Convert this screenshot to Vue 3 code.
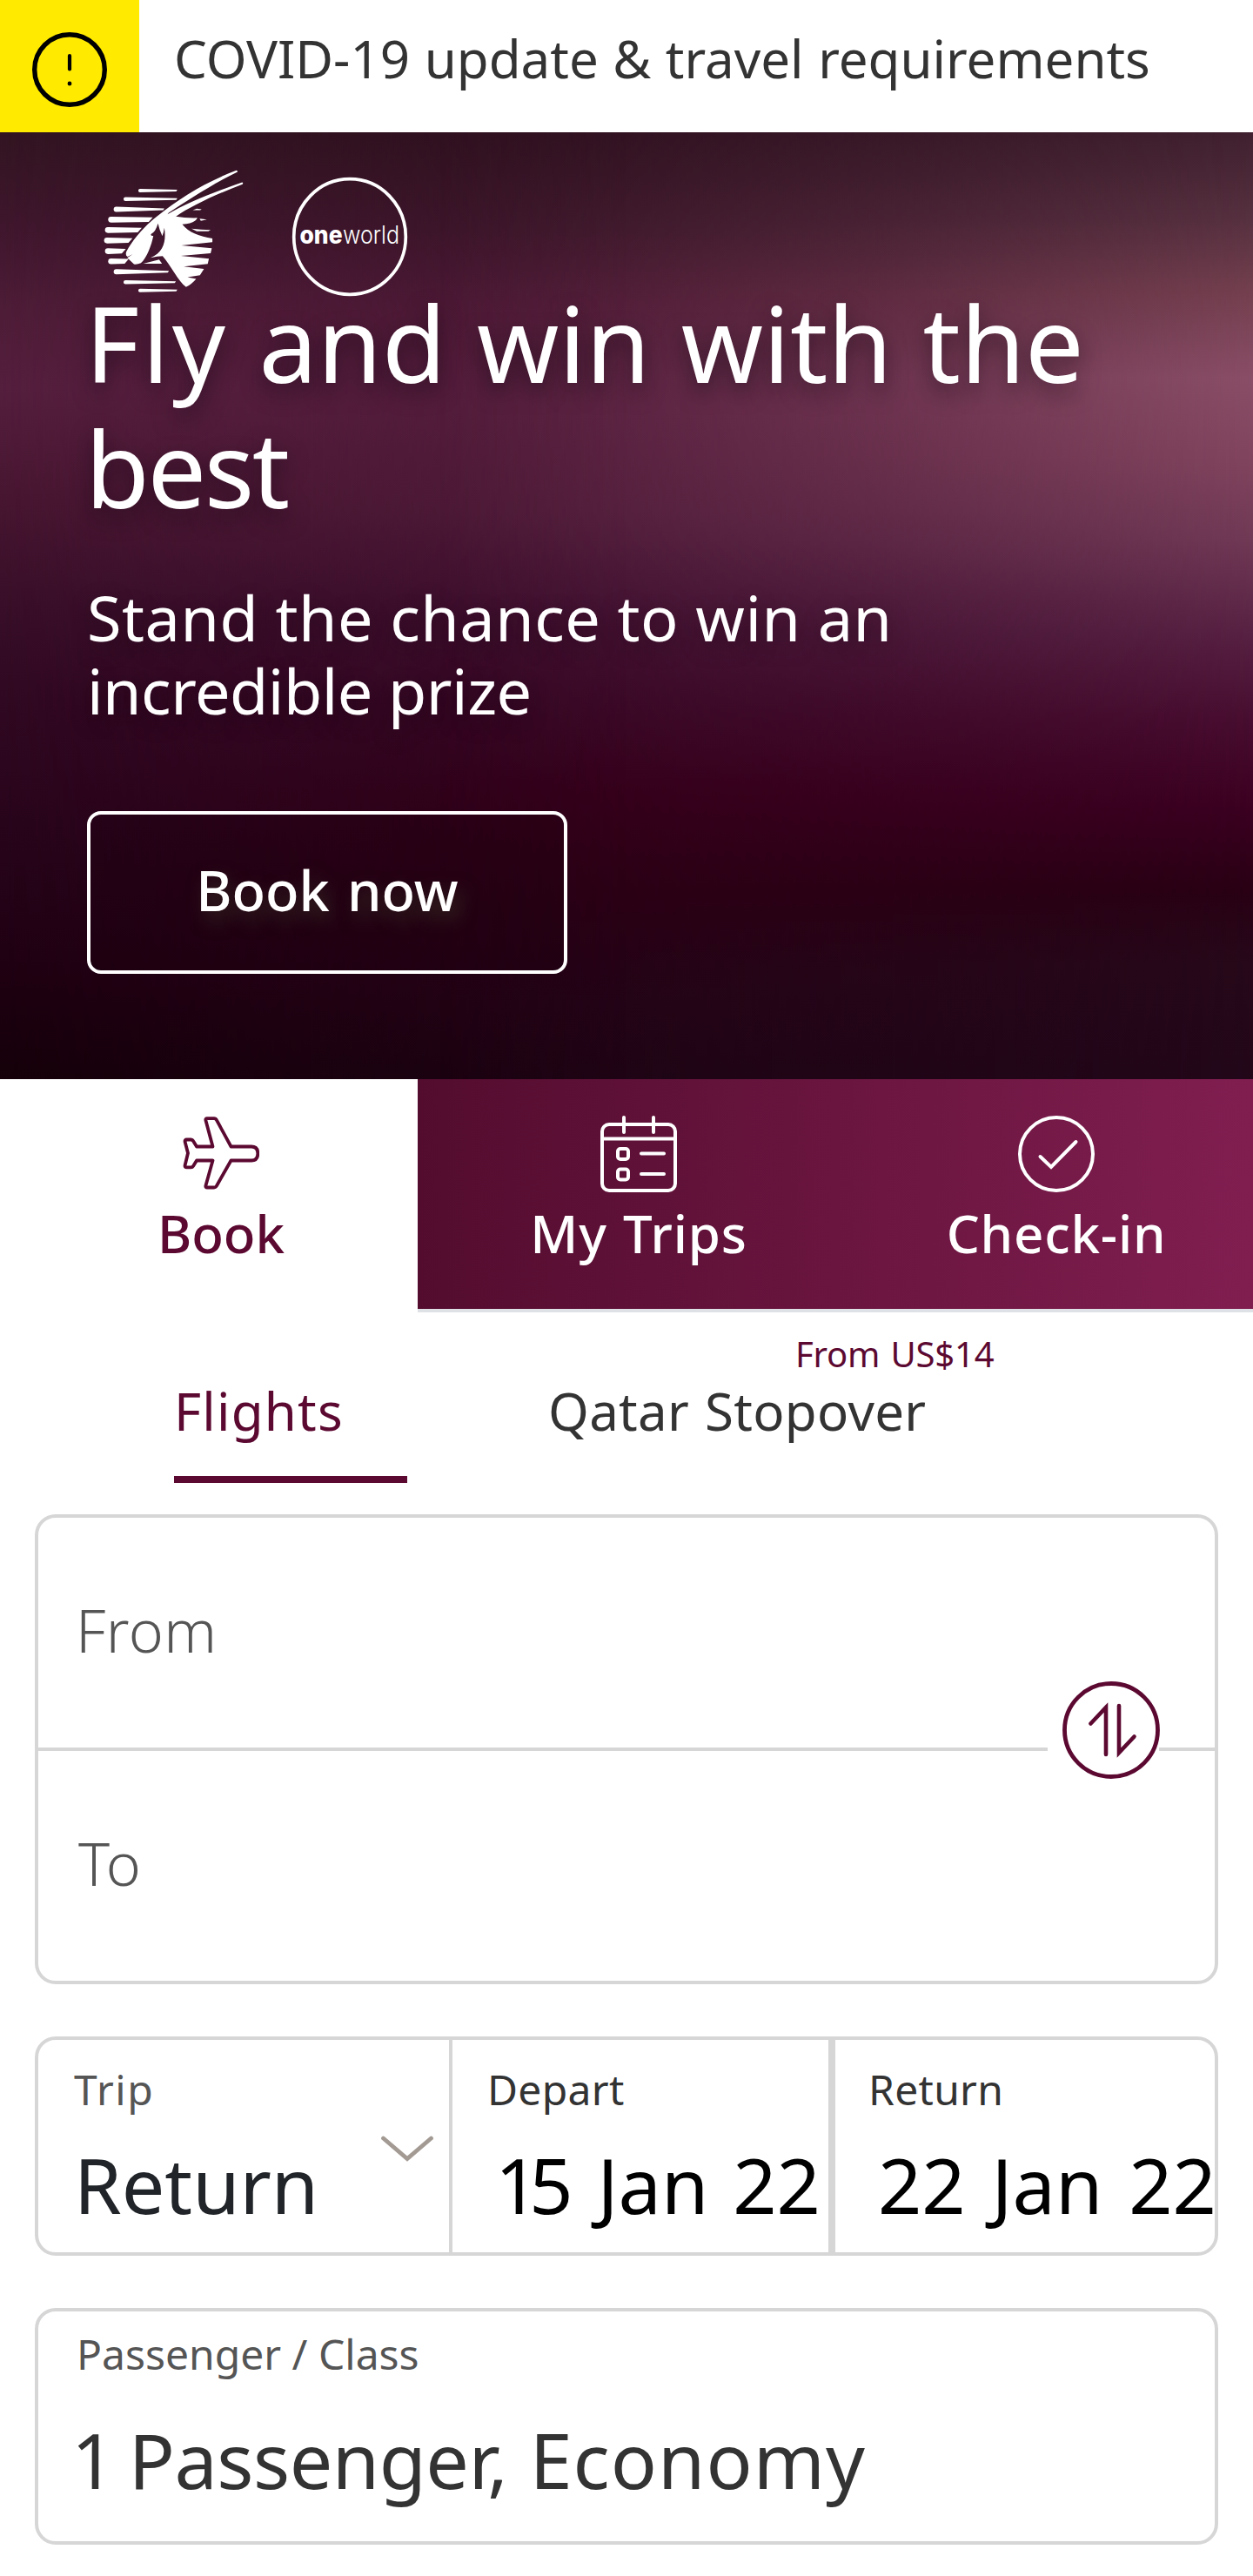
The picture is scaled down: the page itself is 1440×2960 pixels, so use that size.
<script setup>
const stripes = [
  [178, 118, 313, 6], [127, 147, 313, 7], [93, 182, 268, 9], [74, 218, 228, 10],
  [63, 254, 190, 10], [60, 290, 158, 10], [63, 327, 135, 10], [74, 362, 145, 10],
  [93, 398, 284, 9], [127, 434, 308, 7], [178, 463, 313, 6],
].map(([x, y, end, r]) => {
  const tail = end > 250 ? 3 : r - 2
  return `M${x + r} ${y - r}L${end} ${y - tail}L${end - (end > 250 ? 4 : 14)} ${y + tail}L${x + r} ${y + r}A${r} ${r} 0 0 1 ${x + r} ${y - r}Z`
})
</script>

<template>
  <div class="page">
    <div class="alert">
      <div class="alert-icon">
        <svg viewBox="0 0 88 88" width="88" height="88" fill="none" stroke="#000" stroke-linecap="round">
          <circle cx="44" cy="44" r="40.3" stroke-width="5.4" />
          <path d="M44 28V43.500" stroke-width="4.200" />
          <path d="M44 59.800V60.200" stroke-width="4.600" />
        </svg>
      </div>
      <span class="alert-text">COVID-19 update &amp; travel requirements</span>
    </div>

    <section class="hero">
      <div class="glow"></div>
      <div class="hero-body">
        <div class="logos">
          <svg class="oryx" viewBox="55 40 490 435" width="163" height="145" fill="#fff">
            <path v-for="d in stripes" :key="d" :d="d" />
            <path d="M195 370L250 356L260 370Z" />
            <path d="M517 48Q521 48 521 53C440 92 350 150 283 194L279 200C345 160 420 130 537 89Q542 91 538 96C440 133 360 172 308 207Q340 213 382 212Q376 231 330 234C352 262 390 276 434 283V296L327 307L432 317L428 334L325 343L422 353L418 371L335 380L405 388L391 410L348 417L378 423Q362 442 343 451C315 430 290 375 262 344Q245 344 220 350C270 330 274 285 268 246Q266 262 261 275Q250 250 246 231Q238 260 222 268Q220 275 230 274C224 305 208 350 187 368Q174 374 163 372L140 350L159 337L141 346Q132 341 137 328C160 285 205 235 245 205C320 145 410 88 517 48Z" />
            <path d="M366 185L380 180L397 182L392 185ZM390 215L415 218L394 222ZM362 249L395 252L428 254L420 258L380 258Z" />
          </svg>
          <svg class="oneworld" viewBox="0 0 136 138" width="136" height="138">
            <ellipse cx="68" cy="69" rx="64.300" ry="66.300" fill="none" stroke="#fff" stroke-width="3.700" />
            <text y="77" x="10.500" textLength="49" lengthAdjust="spacingAndGlyphs" class="one">one</text>
            <text y="77" x="60" textLength="65" lengthAdjust="spacingAndGlyphs" class="world">world</text>
          </svg>
        </div>
        <h1><span class="loose">Fly</span> and win with the<br /><span class="tight">best</span></h1>
        <p><span class="wide">Stand the chance to win an</span><br />incredible prize</p>
        <button class="book-now">Book now</button>
      </div>
    </section>

    <nav class="tabs">
      <div class="tab active">
        <svg viewBox="0 0 88 88" width="88" height="88" fill="none" stroke="#5c0931" stroke-width="3.800" stroke-linejoin="round">
          <path d="M28 3.200H36Q38 3.200 39 5.200L55.500 35.500H79Q86.300 35.500 86.300 43.500Q86.300 51.500 79 51.500H55.500L39 80.500Q38 82.500 36 82.500H28Q26 82.500 26.400 80.500L34.500 51.500H16L12 58Q11.200 59.300 9.500 59.300H4.500Q2.200 59.300 2.600 57L6 43L2.600 30Q2.200 27.500 4.500 27.500H9.500Q11.200 27.500 12 29L16 35.500H34.500L26.400 5.200Q26 3.200 28 3.200Z" />
        </svg>
        <span>Book</span>
      </div>
      <div class="tab">
        <svg viewBox="0 0 88 88" width="88" height="88" fill="none" stroke="#fff" stroke-width="4" stroke-linecap="round">
          <rect x="2" y="10" width="84" height="76" rx="8" />
          <path d="M2 26.500H86M27 2V19M61 2V19M47 43.500H73M47 67H73" />
          <rect x="20" y="38" width="12" height="12" rx="3" />
          <rect x="20" y="61.500" width="12" height="12" rx="3" />
        </svg>
        <span>My Trips</span>
      </div>
      <div class="tab">
        <svg viewBox="0 0 88 88" width="88" height="88" fill="none" stroke="#fff" stroke-width="4" stroke-linecap="round">
          <circle cx="44" cy="44" r="42" />
          <path d="M25.500 47L38 59L66.500 30" />
        </svg>
        <span>Check-in</span>
      </div>
    </nav>

    <div class="subnav">
      <div class="sub selected">Flights</div>
      <div class="sub stopover">
        <span class="price">From US$14</span>
        <span>Qatar Stopover</span>
      </div>
    </div>

    <div class="card places">
      <div class="place">From</div>
      <div class="place to">To</div>
      <div class="swap">
        <svg viewBox="0 0 112 112" width="112" height="112" fill="none" stroke="#5c0931" stroke-linecap="round">
          <circle cx="56" cy="56" r="53.500" stroke-width="4.800" />
          <path d="M32.500 48.500L50 30V84" stroke-width="4.600" />
          <path d="M65 28V82L82.500 63.500" stroke-width="4.600" />
        </svg>
      </div>
    </div>

    <div class="card dates">
      <div class="cell trip">
        <div class="label muted">Trip</div>
        <div class="value">Return</div>
        <svg class="chevron" viewBox="0 0 60 30" width="60" height="30" fill="none" stroke="#a39a93" stroke-width="4.800" stroke-linecap="round">
          <path d="M2.500 3L30 26.500L57.500 3" />
        </svg>
      </div>
      <div class="cell depart">
        <div class="label">Depart</div>
        <div class="value date"><span class="slim">1</span>5 Jan 22</div>
      </div>
      <div class="cell return">
        <div class="label">Return</div>
        <div class="value date">22 Jan 22</div>
      </div>
    </div>

    <div class="card passengers">
      <div class="label muted">Passenger / Class</div>
      <div class="value"><span class="slim">1</span> Passenger, <span class="cabin">Economy</span></div>
    </div>
  </div>
</template>

<style>
body { margin: 0; background: #fff; }
</style>

<style scoped>
* { box-sizing: border-box; }
.page {
  width: 1440px;
  height: 2960px;
  overflow: hidden;
  background: #fff;
  color: #333;
  font-family: "Noto Sans", "Open Sans", sans-serif;
  white-space: nowrap;
}
.alert { display: flex; height: 152px; }
.alert-icon { width: 160px; padding: 36px; background: #ffea00; }
.alert-icon svg { display: block; }
.alert-text { padding-left: 40px; font-size: 60px; line-height: 134px; word-spacing: 1px; }

.hero {
  position: relative;
  height: 1088px;
  color: #fff;
  background: linear-gradient(180deg, #2f101f 0, #3b1529 10%, #4b1734 18%, #531c3b 29%, #4e1a38 40%, #400f2f 50%, #380825 60%, #330019 70%, #2a0015 82%, #230316 92%, #1e0414 100%);
}
.hero::before, .glow { content: ""; position: absolute; inset: 0; }
.hero::before {
  background: linear-gradient(180deg, #321421 0, #3f162d 10%, #4e1c37 19%, #541e3d 27%, #471530 39%, #380e28 50%, #300821 60%, #28041b 73%, #200013 87%, #150009 100%);
  -webkit-mask: linear-gradient(90deg, #000 0, transparent 50%);
  mask: linear-gradient(90deg, #000 0, transparent 50%);
}
.glow {
  background: linear-gradient(180deg, #40202f 0, #56303f 9%, #74404f 17%, #8a4e67 26%, #82455f 34%, #703955 43%, #572143 53%, #480d30 62%, #3c0021 71%, #290014 80%, #26081a 88%, #220719 100%);
  -webkit-mask: linear-gradient(90deg, transparent 35%, rgba(0,0,0,.12) 45%, rgba(0,0,0,.48) 70%, #000 100%);
  mask: linear-gradient(90deg, transparent 35%, rgba(0,0,0,.12) 45%, rgba(0,0,0,.48) 70%, #000 100%);
}
.hero-body { position: relative; padding-left: 98px; }
.logos { display: flex; height: 170px; align-items: flex-start; }
.oryx { flex: none; margin: 41px 0 0 20px; }
.oneworld { flex: none; margin: 51px 0 0 53px; }
.oneworld text { fill: #fff; font-family: Inter, "Liberation Sans", sans-serif; font-size: 28px; }
.one { font-weight: 800; }
.world { font-weight: 300; }
h1 {
  margin: 0;
  font-size: 120px;
  line-height: 144px;
  font-weight: 400;
  word-spacing: 4px;
  text-shadow: 0 10px 24px rgba(20, 10, 20, .55);
}
.loose { letter-spacing: 3.3px; }
.tight { letter-spacing: -2.4px; }
p {
  margin: 57px 0 0 2px;
  font-size: 72px;
  line-height: 84px;
  letter-spacing: -.5px;
  text-shadow: 0 8px 24px rgba(20, 0, 15, .4);
}
.wide { letter-spacing: .5px; }
.book-now {
  display: block;
  width: 552px;
  height: 187px;
  margin: 97px 0 0 2px;
  padding: 0 0 5px;
  border: 4px solid #fff;
  border-radius: 16px;
  background: rgba(20, 0, 10, .18);
  color: #fff;
  font: 500 63px/174px "Noto Sans", "Open Sans", sans-serif;
  word-spacing: 4px;
  text-shadow: 6px 10px 20px rgba(60, 60, 40, .7);
}

.tabs {
  display: grid;
  grid-template-columns: repeat(3, 480px);
  height: 268px;
  background: linear-gradient(90deg, #530c2e 480px, #801e50 1440px);
  color: #fff;
}
.tab {
  display: flex;
  flex-direction: column;
  align-items: center;
  padding: 42px 0 0 28px;
  border-bottom: 4px solid #dee2e6;
  font-size: 60px;
  line-height: 80px;
  font-weight: 500;
  letter-spacing: .8px;
  word-spacing: 2px;
}
.tab svg { margin-bottom: 7px; }
.tab.active { background: #fff; border-color: #fff; color: #5c0931; letter-spacing: 0; }

.subnav { display: flex; gap: 162px; height: 232px; padding-left: 200px; font-size: 60px; line-height: 80px; }
.selected { width: 268px; height: 196px; padding-top: 73px; border-bottom: 8px solid #5c0931; color: #5c0931; letter-spacing: 1.2px; }
.stopover { display: flex; flex-direction: column; padding-top: 23px; letter-spacing: .3px; word-spacing: 2px; }
.price { margin-left: 284px; font-size: 40px; line-height: 50px; color: #5c0931; letter-spacing: -.2px; }

.card { margin: 0 40px 60px; border: 4px solid #d6d6d6; border-radius: 24px; }
.places { position: relative; height: 540px; }
.place { height: 264px; padding-left: 43px; font-size: 68px; line-height: 258px; font-weight: 300; letter-spacing: .4px; color: #555; }
.place.to { height: 268px; border-top: 4px solid #d6d6d6; padding-left: 46px; }
.swap { position: absolute; left: 1160px; top: 188px; width: 128px; height: 112px; padding-left: 17px; background: #fff; }
.swap svg { display: block; overflow: visible; }

.label { font-size: 48px; line-height: 60px; letter-spacing: .3px; }
.muted { color: #555; }
.value { font-size: 88px; line-height: 100px; }
.dates { display: flex; height: 252px; }
.cell { flex: none; padding-top: 27px; }
.cell .value { margin-top: 29px; }
.trip { position: relative; width: 476px; padding-left: 41px; border-right: 4px solid #d6d6d6; }
.trip .label { letter-spacing: 1.6px; }
.trip .value { color: #212529; }
.chevron { position: absolute; left: 394px; top: 110px; }
.depart { width: 440px; padding-left: 40px; border-right: 8px solid #d6d6d6; }
.return { padding-left: 38px; }
.cell .date { margin-left: 9px; color: #000; word-spacing: 5px; }
.date .slim { letter-spacing: -11px; }
.return .date { margin-left: 11px; word-spacing: 7px; }
.passengers { height: 272px; padding: 19px 0 0 44px; margin-bottom: 0; }
.passengers .label { letter-spacing: 0; }
.passengers .value { margin: 41px 0 0 -6px; letter-spacing: -.5px; word-spacing: 3px; }
.passengers .slim { letter-spacing: -10px; }
.passengers .cabin { letter-spacing: 1px; }
</style>
